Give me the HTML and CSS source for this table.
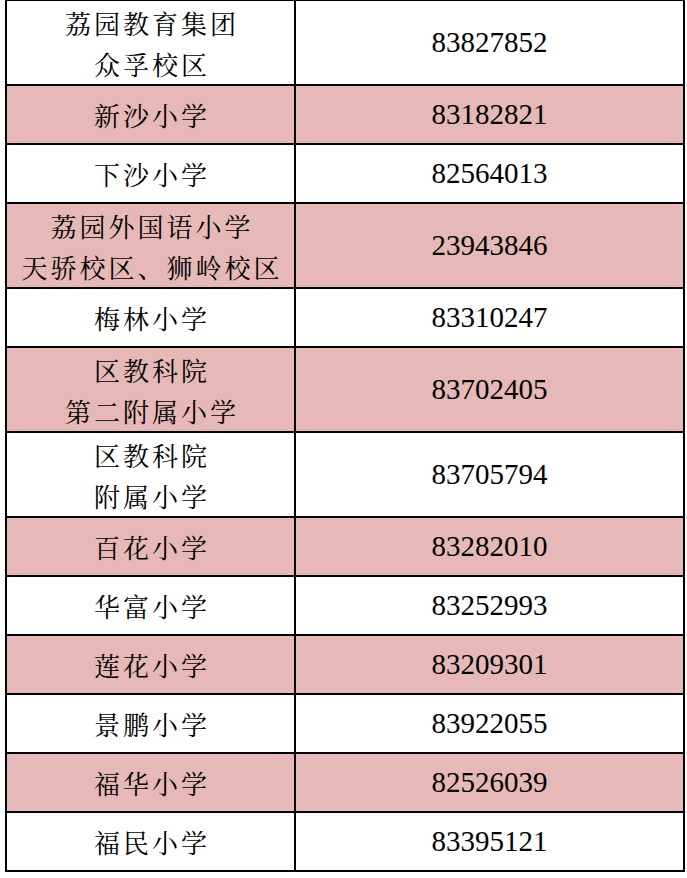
FILE: index.html
```html
<!DOCTYPE html>
<html lang="zh-CN">
<head>
<meta charset="utf-8">
<title>学校电话</title>
<link rel="stylesheet" href="styles.css">
</head>
<body>
<table class="phones">
  <colgroup><col class="c-name"><col class="c-tel"></colgroup>
  <tr class="two"><td class="name">荔园教育集团<br>众孚校区</td><td class="tel">83827852</td></tr>
  <tr class="one pink"><td class="name">新沙小学</td><td class="tel">83182821</td></tr>
  <tr class="one"><td class="name">下沙小学</td><td class="tel">82564013</td></tr>
  <tr class="two pink"><td class="name">荔园外国语小学<br>天骄校区、狮岭校区</td><td class="tel">23943846</td></tr>
  <tr class="one"><td class="name">梅林小学</td><td class="tel">83310247</td></tr>
  <tr class="two pink"><td class="name">区教科院<br>第二附属小学</td><td class="tel">83702405</td></tr>
  <tr class="two"><td class="name">区教科院<br>附属小学</td><td class="tel">83705794</td></tr>
  <tr class="one pink"><td class="name">百花小学</td><td class="tel">83282010</td></tr>
  <tr class="one"><td class="name">华富小学</td><td class="tel">83252993</td></tr>
  <tr class="one pink"><td class="name">莲花小学</td><td class="tel">83209301</td></tr>
  <tr class="one"><td class="name">景鹏小学</td><td class="tel">83922055</td></tr>
  <tr class="one pink"><td class="name">福华小学</td><td class="tel">82526039</td></tr>
  <tr class="one"><td class="name">福民小学</td><td class="tel">83395121</td></tr>
</table>
</body>
</html>
```
FILE: styles.css
```css
html, body {
  margin: 0;
  padding: 0;
  background: #ffffff;
}
.phones {
  border-collapse: collapse;
  margin: -1px 0 0 5px;
  width: 678px;
  table-layout: fixed;
  color: #000;
}
.c-name { width: 289px; }
.c-tel { width: 389px; }
.phones td {
  border: 2px solid #000;
  padding: 0;
  text-align: center;
  vertical-align: middle;
}
.one { height: 59px; }
.two { height: 85px; }
.pink td { background: #e6b8b7; }
.name {
  font-family: "Noto Serif CJK SC", "Noto Sans CJK SC", sans-serif;
  font-size: 26px;
  line-height: 41px;
  letter-spacing: 3px;
  padding-left: 3px !important;
}
.tel {
  font-family: "Liberation Serif", serif;
  font-size: 29px;
  line-height: 41px;
}
```
